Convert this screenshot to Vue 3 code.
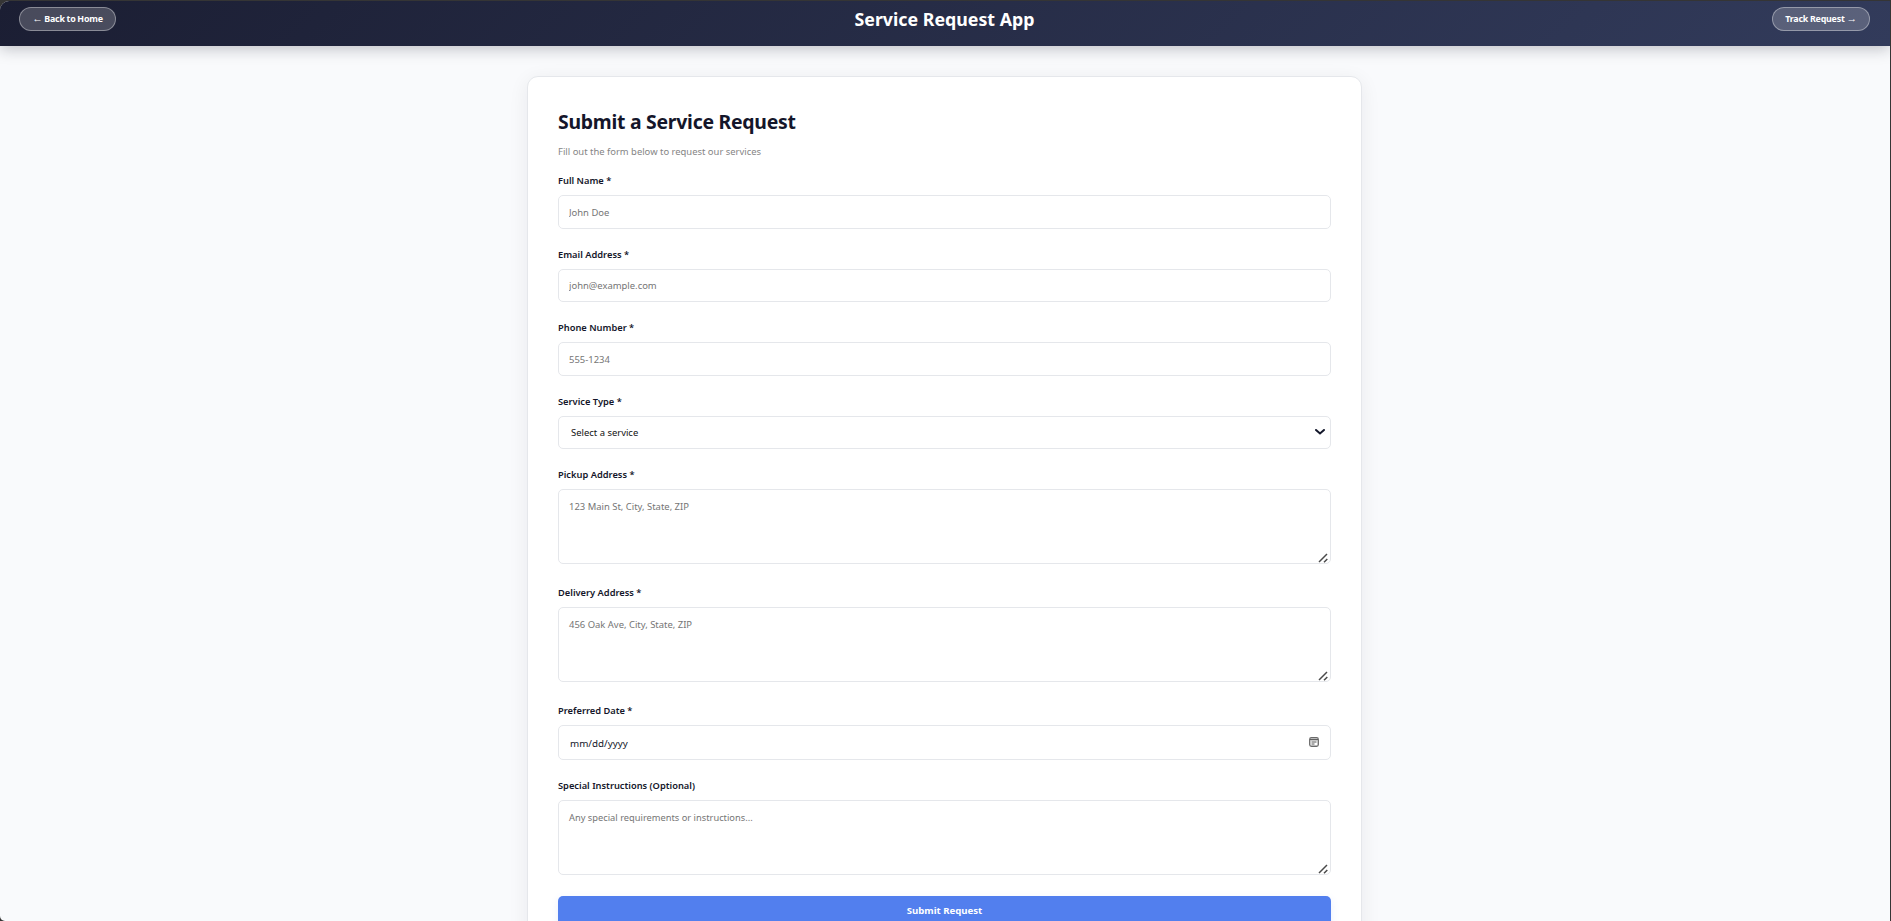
<script setup>
const fields = [
  { id: 'name', label: 'Full Name *', kind: 'input', size: 'h34', hint: 'John Doe' },
  { id: 'email', label: 'Email Address *', kind: 'input', size: 'h33', hint: 'john@example.com' },
  { id: 'phone', label: 'Phone Number *', kind: 'input', size: 'h34', hint: '555-1234' },
  { id: 'service', label: 'Service Type *', kind: 'select', size: 'h33', hint: 'Select a service' },
  { id: 'pickup', label: 'Pickup Address *', kind: 'area', size: 'h75', hint: '123 Main St, City, State, ZIP' },
  { id: 'delivery', label: 'Delivery Address *', kind: 'area', size: 'h75', hint: '456 Oak Ave, City, State, ZIP' },
  { id: 'date', label: 'Preferred Date *', kind: 'date', size: 'h35', hint: 'mm/dd/yyyy' },
  { id: 'notes', label: 'Special Instructions (Optional)', kind: 'area', size: 'h75', hint: 'Any special requirements or instructions...' },
]
</script>

<template>
  <div class="window">
    <div class="page">
      <header class="bar">
        <button class="pill back"><span class="arrow">←</span> Back to Home</button>
        <h1 class="brand">Service Request App</h1>
        <button class="pill track">Track Request <span class="arrow">→</span></button>
      </header>
      <main class="card">
        <h2 class="title">Submit a Service Request</h2>
        <p class="sub">Fill out the form below to request our services</p>
        <form class="form" @submit.prevent>
          <div v-for="f in fields" :key="f.id" class="field" :class="[f.kind, f.id]">
            <label class="label" :for="f.id">{{ f.label }}</label>
            <div class="box" :class="f.size">
              <textarea v-if="f.kind === 'area'" :id="f.id" class="control" :placeholder="f.hint"></textarea>
              <select v-else-if="f.kind === 'select'" :id="f.id" class="control">
                <option>{{ f.hint }}</option>
              </select>
              <input v-else :id="f.id" class="control" type="text" :placeholder="f.hint" />
              <svg v-if="f.kind === 'select'" class="chevron" viewBox="0 0 10 6" width="10" height="6">
                <path d="M1 1 L5 4.5 L9 1" fill="none" stroke="#14182b" stroke-width="2" stroke-linecap="round" />
              </svg>
              <svg v-if="f.kind === 'area'" class="grip" viewBox="0 0 10 10" width="10" height="10">
                <path d="M1 9 L9 1 M6 9.3 L9.3 6" fill="none" stroke="#4a4a4a" stroke-width="1.5" />
              </svg>
              <svg v-if="f.kind === 'date'" class="calendar" viewBox="0 0 10 10" width="10" height="10">
                <rect x="0.6" y="0.6" width="8.8" height="8.8" rx="1.8" fill="#d4d4d4" stroke="#6a6a6a" stroke-width="1.1" />
                <path d="M1 2.6 H9" stroke="#555" stroke-width="1" />
                <path d="M3 5 H7 M3 7 H5" stroke="#777" stroke-width="0.9" />
                <rect x="6" y="6" width="2" height="2" fill="#fff" />
              </svg>
            </div>
          </div>
          <button class="submit" type="submit">Submit Request</button>
        </form>
      </main>
    </div>
  </div>
</template>

<style>
html, body { margin: 0; background: #2f2f2f; overflow: hidden; }
</style>

<style scoped>
* { box-sizing: border-box; }
.window {
  width: 1891px; height: 921px; padding: 1px 1px 0 0; background: #353535;
  font-family: "Noto Sans", "Open Sans", sans-serif; overflow: hidden;
}
.page { width: 1890px; height: 920px; background: #f9fafc; border-radius: 9px 0 0 5px; overflow: hidden; }
.bar {
  position: relative; height: 45px; padding: 6px 20px 0 19px;
  display: grid; grid-template-columns: 1fr auto 1fr; align-items: start;
  background: linear-gradient(135deg, #1b1e33 0%, #323b5b 100%);
  box-shadow: 0 3px 14px rgba(20, 22, 40, 0.25);
}
.pill {
  height: 24px; padding: 0; border: 1px solid rgba(255, 255, 255, 0.36); border-radius: 12px;
  background: rgba(255, 255, 255, 0.2); color: #fff; font: 700 8.9px/20px "Noto Sans", sans-serif;
  white-space: nowrap; letter-spacing: -0.2px; word-spacing: -0.3px;
}
.arrow { font-family: "Liberation Sans", sans-serif; font-size: 10.5px; line-height: 10px; }
.back { width: 97px; }
.track { width: 98px; justify-self: end; }
.brand { margin: 0; font-size: 17.8px; line-height: 24px; font-weight: 700; color: #fff; }
.card {
  width: 835px; height: 900px; margin: 30px 0 0 527px; padding: 30px 30px 0;
  background: #fff; border: 1px solid #e5e7eb; border-radius: 11px;
  box-shadow: 0 4px 20px rgba(15, 23, 42, 0.07);
}
.title { margin: 0; height: 38px; font-size: 19.4px; line-height: 30px; font-weight: 700; letter-spacing: -0.25px; color: #14162a; white-space: nowrap; }
.sub { margin: 0; height: 29px; font-size: 9.43px; line-height: 14px; color: #858585; white-space: nowrap; }
.form { display: flex; flex-direction: column; }
.field { margin-bottom: 19px; }
.field.area { margin-bottom: 22px; }
.field.notes { margin-bottom: 21px; }
.label { display: block; height: 21px; font-size: 9.3px; line-height: 14px; font-weight: 600; color: #14162a; white-space: nowrap; }
.box { position: relative; width: 773px; }
.h33 { height: 33px; } .h34 { height: 34px; } .h35 { height: 35px; } .h75 { height: 75px; }
.control {
  display: block; width: 100%; height: 100%; margin: 0; padding: 0 10px; appearance: none; resize: none;
  border: 1px solid #e5e7eb; border-radius: 5px; background: #fff; outline: none;
  font-family: "Noto Sans", sans-serif; font-size: 9.45px; line-height: 14px; color: #14162a;
}
textarea.control { padding: 10px; overflow: hidden; }
.notes .control { font-size: 9.3px; }
select.control { padding: 0 12px; color: #111; }
.control::placeholder { color: #757575; opacity: 1; }
.date .control::placeholder { color: #14162a; }
.date .control { padding: 1px 11px 0; font-size: 9.8px; }
.chevron { position: absolute; right: 6px; top: 13px; }
.grip { position: absolute; right: 3px; bottom: 1px; }
.calendar { position: absolute; right: 12px; top: 12px; }
.submit {
  width: 773px; height: 34px; border: 0; padding: 0 0 5px; border-radius: 5px; background: #527fee; color: #fff;
  font: 700 9.6px/29px "Noto Sans", sans-serif; box-shadow: 0 3px 8px rgba(82, 127, 238, 0.12);
}
</style>
